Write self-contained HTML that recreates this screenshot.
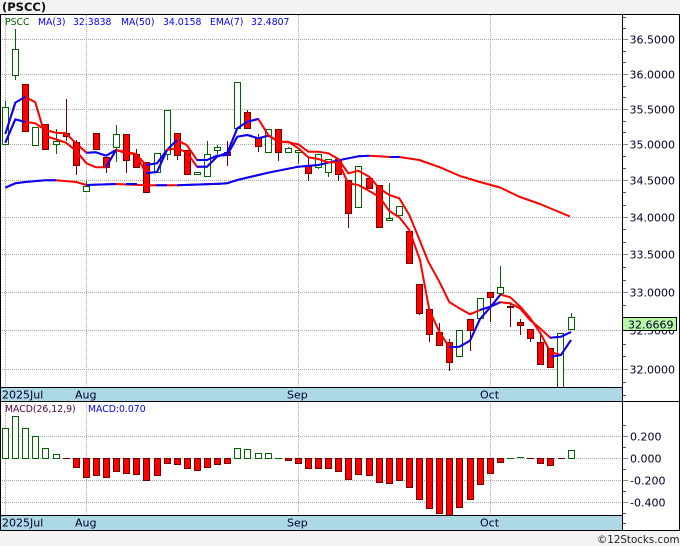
<!DOCTYPE html>
<html><head><meta charset="utf-8"><title>PSCC</title>
<style>
html,body{margin:0;padding:0;background:#f3f3f3}
svg{display:block}
text{font-family:"DejaVu Sans",sans-serif}
.a{font-size:11px;fill:#000028}
.l{font-size:9.3px;fill:#0000ff}
</style></head><body>
<svg width="680" height="546" viewBox="0 0 680 546" xmlns="http://www.w3.org/2000/svg">
<rect width="680" height="546" fill="#f3f3f3"/>
<text x="2" y="11" style="font-size:11.5px;font-weight:bold;fill:#111">(PSCC)</text>
<rect x="0.5" y="14.5" width="679" height="516" fill="#fff"/>
<!-- grid -->
<path fill="none" stroke="#a8a8a8" stroke-width="1" stroke-dasharray="1 1" d="M5.5 15V530M86.5 15V530M298.5 15V530M490.5 15V530M0 39.5H622M0 74.5H622M0 109.5H622M0 144.5H622M0 180.5H622M0 217.5H622M0 254.5H622M0 292.5H622M0 330.5H622M0 369.5H622M0 436.5H622M0 458.5H622M0 480.5H622M0 502.5H622"/>
<!-- green wicks -->
<path fill="none" stroke="#006400" d="M5.5 101V144M15.5 29V80M56.5 129V154M86.5 181V191M116.5 125V162M167.5 110V160M207.5 141V176M217.5 145V154M288.5 147V152M298.5 150V164M318.5 154V169M328.5 160V177M389.5 183V220M500.5 266V293M571.5 313V329"/>
<!-- red wicks -->
<path fill="none" stroke="#700000" d="M66.5 99V141M76.5 140V175M106.5 157V173M126.5 134V173M136.5 149V167M177.5 133V160M227.5 141V166M247.5 110V128M258.5 134V152M278.5 129V161M308.5 158V181M338.5 160V181M348.5 181V228M419.5 284V315M429.5 309V342M439.5 323V345M449.5 339V371M470.5 319V351M490.5 292V322M510.5 302V327M520.5 319V335M530.5 329V342M540.5 332V364"/>
<!-- green bodies -->
<path fill="#fff" stroke="#006400" d="M2.5 107.5h6v37h-6zM12.5 49.5h6v26h-6zM32.5 127.5h6v18h-6zM53.5 141.5h6v3h-6zM83.5 186.5h6v5h-6zM113.5 134.5h6v13h-6zM154.5 153.5h6v19h-6zM164.5 110.5h6v44h-6zM194.5 172.5h6v2h-6zM204.5 154.5h6v22h-6zM214.5 147.5h6v3h-6zM234.5 82.5h6v46h-6zM265.5 129.5h6v23h-6zM285.5 148.5h6v4h-6zM295.5 150.5h6v2h-6zM315.5 154.5h6v13h-6zM325.5 159.5h6v13h-6zM355.5 166.5h6v41h-6zM386.5 218.5h6v2h-6zM396.5 206.5h6v9h-6zM456.5 330.5h6v26h-6zM477.5 298.5h6v20h-6zM497.5 287.5h6v6h-6zM557.5 333.5h6v60h-6zM568.5 317.5h6v12h-6z"/>
<!-- red bodies -->
<path fill="#ff0000" stroke="#700000" d="M22.5 84.5h6v47h-6zM42.5 124.5h6v25h-6zM63.5 133.5h6v3h-6zM73.5 142.5h6v23h-6zM93.5 133.5h6v16h-6zM103.5 157.5h6v10h-6zM123.5 134.5h6v26h-6zM133.5 154.5h6v13h-6zM143.5 162.5h6v30h-6zM174.5 133.5h6v22h-6zM184.5 150.5h6v24h-6zM224.5 152.5h6v3h-6zM244.5 112.5h6v16h-6zM255.5 138.5h6v8h-6zM275.5 129.5h6v23h-6zM305.5 166.5h6v7h-6zM335.5 159.5h6v15h-6zM345.5 180.5h6v33h-6zM366.5 178.5h6v10h-6zM376.5 185.5h6v42h-6zM406.5 231.5h6v32h-6zM416.5 284.5h6v29h-6zM426.5 309.5h6v25h-6zM436.5 332.5h6v13h-6zM446.5 342.5h6v20h-6zM467.5 319.5h6v11h-6zM487.5 292.5h6v5h-6zM507.5 306.5h6v1h-6zM517.5 322.5h6v3h-6zM527.5 329.5h6v9h-6zM537.5 342.5h6v22h-6zM547.5 348.5h6v19h-6z"/>
<!-- MA50 -->
<g fill="none" stroke-width="2" stroke-linejoin="round">
<path stroke="#ff0000" d="M5.3 187.7L15.3 183.3L25.3 182L45.3 180.3L56 180.3L76 182L86.5 185L116 184L146 185.3L167 185.3L177 185.3L220 183.7L227 183.3L237.3 180L268.3 172.7L298.3 166.7L318.3 165L338.3 160.3L358.3 156.3L369.3 155.7L390 157L399.3 157L419.3 160L440 167.3L460 176L480 182L500 187.5L520 197L540 204L570 216.5"/>
<path stroke="#0000ff" d="M5.3 187.7L15.3 183.3L25.3 182L45.3 180.3L56 180.3M86.5 185L116 184M126 184L137 184M156 185.3L167 185.3M177 185.3L220 183.7L227 183.3L237.3 180L268.3 172.7L298.3 166.7L318.3 165L338.3 160.3L358.3 156.3L369.3 155.7M390 157L399.3 157"/>
<!-- EMA7 -->
<path stroke="#ff0000" d="M5.3 142.7L15.3 119.3L25.3 122L35.3 123.3L45.3 130L56 132.7L66 133.3L76 143.3L86.5 152.7L96 152.3L106 155.7L116 150L126.5 153.3L136 154L146 165L157 163.3L167 150L177 140L187 145.3L197 160L207 160L217 155.7L227.3 155L237.3 136.7L247.3 135L258.3 138.3L268.3 135.7L278.3 141.7L288.3 142.3L298.3 144.3L308.3 151.7L318.3 151.7L328.3 153.3L338.3 159L348.3 173.3L358.3 170.7L369.3 176.7L379.3 188.3L389.3 195L399.3 198.3L409.3 215L419.3 239.3L428.3 261.7L439.3 281.7L449.3 302L459.3 308.3L470 314.3L480 310L490.3 306.7L500 302.3L510 303.3L520 308.3L530 320L540 328.3L550.3 337.7L561 336.7L571 332"/>
<path stroke="#0000ff" d="M5.3 142.7L15.3 119.3L25.3 122M86.5 152.7L96 152.3L106 155.7L116 150M146 165L157 163.3L167 150L177 140M197 160L207 160L217 155.7L227.3 155L237.3 136.7L247.3 135L258.3 138.3L268.3 135.7M480 310L490.3 306.7L500 302.3M550.3 337.7L561 336.7L571 332"/>
<!-- MA3 -->
<path stroke="#ff0000" d="M5.3 134L15.3 102.7L25.3 96.7L35.3 102.3L45.3 136L56 139.3L66 142.7L76 150.7L86.5 163.3L96 167.3L106 167.3L116 150L126.5 152L136 154L146 173.3L157 172L167 150L177 148L187 152.7L197 166.7L207 166.7L217 156.7L227.3 152.7L237.3 128.3L247.3 121.7L258.3 119L268.3 135L278.3 141.7L288.3 141.7L298.3 148.3L308.3 157.3L318.3 159L328.3 162.3L338.3 162.3L348.3 183.3L358.3 185L369.3 191L379.3 196.7L389.3 211L399.3 217.3L409.3 230L420 260L429.3 310L439.3 331.7L449.3 347.3L459.3 346.7L470 340.7L480 319L490.3 307.3L500.3 294.7L510.3 297.3L520.3 306.7L530.3 318.3L540.3 333L550.3 352L561 355L571 340"/>
<path stroke="#0000ff" d="M5.3 134L15.3 102.7L25.3 96.7M106 167.3L116 150M146 173.3L157 172L167 150M197 166.7L207 166.7L217 156.7L227.3 152.7L237.3 128.3L247.3 121.7L258.3 119M449.3 347.3L459.3 346.7L470 340.7L480 319L490.3 307.3L500.3 294.7M551.5 356.7L561 355L571 340"/>
</g>
<!-- MACD green -->
<path fill="#fff" stroke="#006400" d="M2.5 428.5h6v30h-6zM12.5 416.5h6v42h-6zM22.5 428.5h6v30h-6zM32.5 436.5h6v22h-6zM42.5 448.5h6v10h-6zM53.5 454.5h6v4h-6zM234.5 448.5h6v10h-6zM244.5 449.5h6v9h-6zM255.5 453.5h6v5h-6zM265.5 453.5h6v5h-6zM568.5 450.5h6v8h-6z"/>
<path fill="none" stroke="#006400" d="M275 458.5h7M507 458.5h7M517 457.5h7"/>
<!-- MACD red -->
<path fill="none" stroke="#700000" d="M63 458.5h7M527 458.5h7M558 458.5h7"/>
<path fill="#ff0000" stroke="#700000" d="M73.5 458.5h6v9h-6zM83.5 458.5h6v19h-6zM93.5 458.5h6v17h-6zM103.5 458.5h6v19h-6zM113.5 458.5h6v13h-6zM123.5 458.5h6v15h-6zM133.5 458.5h6v16h-6zM143.5 458.5h6v22h-6zM154.5 458.5h6v17h-6zM164.5 458.5h6v5h-6zM174.5 458.5h6v6h-6zM184.5 458.5h6v10h-6zM194.5 458.5h6v12h-6zM204.5 458.5h6v9h-6zM214.5 458.5h6v6h-6zM224.5 458.5h6v5h-6zM285.5 458.5h6v2h-6zM295.5 458.5h6v5h-6zM305.5 458.5h6v10h-6zM315.5 458.5h6v10h-6zM325.5 458.5h6v10h-6zM335.5 458.5h6v13h-6zM345.5 458.5h6v21h-6zM355.5 458.5h6v16h-6zM366.5 458.5h6v17h-6zM376.5 458.5h6v24h-6zM386.5 458.5h6v25h-6zM396.5 458.5h6v22h-6zM406.5 458.5h6v29h-6zM416.5 458.5h6v41h-6zM426.5 458.5h6v50h-6zM436.5 458.5h6v55h-6zM446.5 458.5h6v60h-6zM456.5 458.5h6v49h-6zM467.5 458.5h6v41h-6zM477.5 458.5h6v26h-6zM487.5 458.5h6v15h-6zM497.5 458.5h6v4h-6zM537.5 458.5h6v5h-6zM547.5 458.5h6v7h-6z"/>
<!-- bands -->
<rect x="1" y="388" width="621" height="13" fill="#add8e6"/>
<rect x="1" y="516" width="621" height="14" fill="#add8e6"/>
<path fill="none" stroke="#000" d="M0 14.5H680M0 387.5H622M0 401.5H680M0 515.5H622M0 530.5H680M0.5 14V531M622.5 14V531M679.5 14V531"/>
<!-- ticks -->
<path fill="none" stroke="#555" d="M623 17.5h3M623 28.5h3M623 51.5h3M623 62.5h3M623 86.5h3M623 97.5h3M623 121.5h3M623 132.5h3M623 156.5h3M623 168.5h3M623 192.5h3M623 205.5h3M623 229.5h3M623 242.5h3M623 267.5h3M623 280.5h3M623 305.5h3M623 318.5h3M623 344.5h3M623 356.5h3M623 382.5h3M623 395.5h3M623 425.5h3M623 447.5h3M623 469.5h3M623 491.5h3M623 513.5h3M623 523.5h3"/>
<path fill="none" stroke="#888" d="M623 39.5h5M623 74.5h5M623 109.5h5M623 144.5h5M623 180.5h5M623 217.5h5M623 254.5h5M623 292.5h5M623 330.5h5M623 369.5h5M623 436.5h5M623 458.5h5M623 480.5h5M623 502.5h5"/>
<!-- legend -->
<text x="5" y="25" class="l" style="fill:#006400">PSCC</text>
<text x="38" y="25" class="l">MA(3)</text>
<text x="73" y="25" class="l">32.3838</text>
<text x="121" y="25" class="l">MA(50)</text>
<text x="163" y="25" class="l">34.0158</text>
<text x="210" y="25" class="l">EMA(7)</text>
<text x="251" y="25" class="l">32.4807</text>
<text x="5" y="412" class="l" style="fill:#500040">MACD(26,12,9)</text>
<text x="88" y="412" class="l">MACD:0.070</text>
<!-- band labels -->
<text x="2" y="398.5" class="a">2025Jul</text><text x="75" y="398.5" class="a">Aug</text><text x="287" y="398.5" class="a">Sep</text><text x="480" y="398.5" class="a">Oct</text>
<text x="2" y="526.5" class="a">2025Jul</text><text x="75" y="526.5" class="a">Aug</text><text x="287" y="526.5" class="a">Sep</text><text x="480" y="526.5" class="a">Oct</text>
<!-- axis labels -->
<text x="629.5" y="43.5" class="a">36.5000</text>
<text x="629.5" y="78.5" class="a">36.0000</text>
<text x="629.5" y="113.5" class="a">35.5000</text>
<text x="629.5" y="148.5" class="a">35.0000</text>
<text x="629.5" y="184.5" class="a">34.5000</text>
<text x="629.5" y="221.5" class="a">34.0000</text>
<text x="629.5" y="258.5" class="a">33.5000</text>
<text x="629.5" y="296.5" class="a">33.0000</text>
<text x="629.5" y="334.5" class="a">32.5000</text>
<text x="629.5" y="373.5" class="a">32.0000</text>
<text x="630" y="440.5" class="a">0.200</text>
<text x="630" y="462.5" class="a">0.000</text>
<text x="630" y="484.5" class="a">-0.200</text>
<text x="630" y="506.5" class="a">-0.400</text>
<!-- current value box -->
<rect x="622.5" y="317.5" width="54" height="13" fill="#b6f7a6" stroke="#000"/>
<text x="628" y="328.5" class="a">32.6669</text>
<!-- footer -->
<text x="597" y="543" style="font-size:10.3px;fill:#222">©12Stocks.com</text>
</svg>
</body></html>
